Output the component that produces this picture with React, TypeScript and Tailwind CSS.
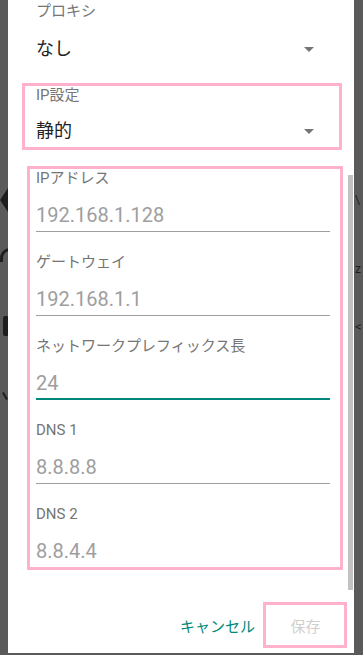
const font = { fontFamily: 'Roboto, "Noto Sans CJK JP", sans-serif' };

function Caret() {
  return (
    <svg width="10" height="5" viewBox="0 0 10 5" className="shrink-0">
      <path d="M0 0h10L5 5z" fill="#757575" />
    </svg>
  );
}

function Spinner({ label, value, valueMt }: { label: string; value: string; valueMt: string }) {
  return (
    <div className="flex flex-col">
      <div className="h-[20px] text-[15px] leading-[20px] text-[#757575]">{label}</div>
      <div className={`flex h-[28px] items-center justify-between pr-[40px] ${valueMt}`}>
        <span className="text-[18px] leading-[28px] text-[#212121]">{value}</span>
        <Caret />
      </div>
    </div>
  );
}

function Field({ label, value, focused }: { label: string; value: string; focused?: boolean }) {
  return (
    <div className="flex flex-col pr-[24px]">
      <div className="h-[20px] text-[15px] leading-[20px] text-[#757575]">{label}</div>
      <div className="mt-[13px] h-[28px] text-[20px] leading-[28px] text-[#9e9e9e]">{value}</div>
      {focused ? (
        <div className="mt-[1px] h-[2px] bg-[#00897b]" />
      ) : (
        <div className="mt-[2px] h-[1px] bg-[#9e9e9e]" />
      )}
    </div>
  );
}

export default function App() {
  return (
    <div className="relative h-[655px] w-[363px] overflow-hidden bg-[#5a5a5a]" style={font}>
      {/* dimmed screen behind the dialog */}
      <svg className="absolute left-0 top-[188px]" width="8" height="24" viewBox="0 0 8 24">
        <path d="M0 12L8 0v24z" fill="#1e1e1e" />
      </svg>
      <span className="absolute left-[0px] top-[248px] h-[14px] w-[10px] rounded-tl-full border-l-[3px] border-t-[3px] border-[#1e1e1e]" />
      <span className="absolute left-[3px] top-[316px] h-[20px] w-[6px] rounded-[2px] bg-[#1e1e1e]" />
      <span className="absolute left-[4px] top-[392px] h-[8px] w-[2px] rotate-[-30deg] bg-[#1e1e1e]" />
      <span className="absolute left-[355px] top-[194px] text-[12px] leading-none text-[#1e1e1e]">\</span>
      <span className="absolute left-[355px] top-[263px] text-[12px] leading-none text-[#1e1e1e]">z</span>
      <span className="absolute left-[355px] top-[320px] text-[13px] leading-none text-[#1e1e1e]">&lt;</span>

      <div className="relative ml-[8px] flex h-[653px] w-[346px] flex-col bg-white pl-[28px]">
        <div className="pt-[1px]">
          <Spinner label="プロキシ" value="なし" valueMt="mt-[14px]" />
        </div>
        <div className="mt-[22px]">
          <Spinner label="IP設定" value="静的" valueMt="mt-[12px]" />
        </div>
        <div className="mt-[23px] flex flex-col gap-[20px]">
          <Field label="IPアドレス" value="192.168.1.128" />
          <Field label="ゲートウェイ" value="192.168.1.1" />
          <Field label="ネットワークプレフィックス長" value="24" focused />
          <Field label="DNS 1" value="8.8.8.8" />
          <Field label="DNS 2" value="8.8.4.4" />
        </div>
        <div className="mt-[36px] flex h-[46px] items-center justify-end gap-[1px] pr-[7px]">
          <button className="h-[46px] px-[8px] text-[15px] font-normal text-[#00897b]">キャンセル</button>
          <button className="h-[46px] w-[83px] text-[15px] font-normal text-[#cfcfcf]">保存</button>
        </div>
        {/* scrollbar */}
        <div className="absolute right-[1px] top-[175px] h-[415px] w-[5px] bg-[#c2c2c2]" />
      </div>

      {/* highlight boxes */}
      <div className="pointer-events-none absolute left-[22px] top-[83px] h-[67px] w-[320px] border-[3px] border-[#ffb1cd]" />
      <div className="pointer-events-none absolute left-[27px] top-[166px] h-[404px] w-[316px] border-[3px] border-[#ffb1cd]" />
      <div className="pointer-events-none absolute left-[263px] top-[602px] h-[46px] w-[84px] border-[3px] border-[#ffb1cd]" />
    </div>
  );
}
